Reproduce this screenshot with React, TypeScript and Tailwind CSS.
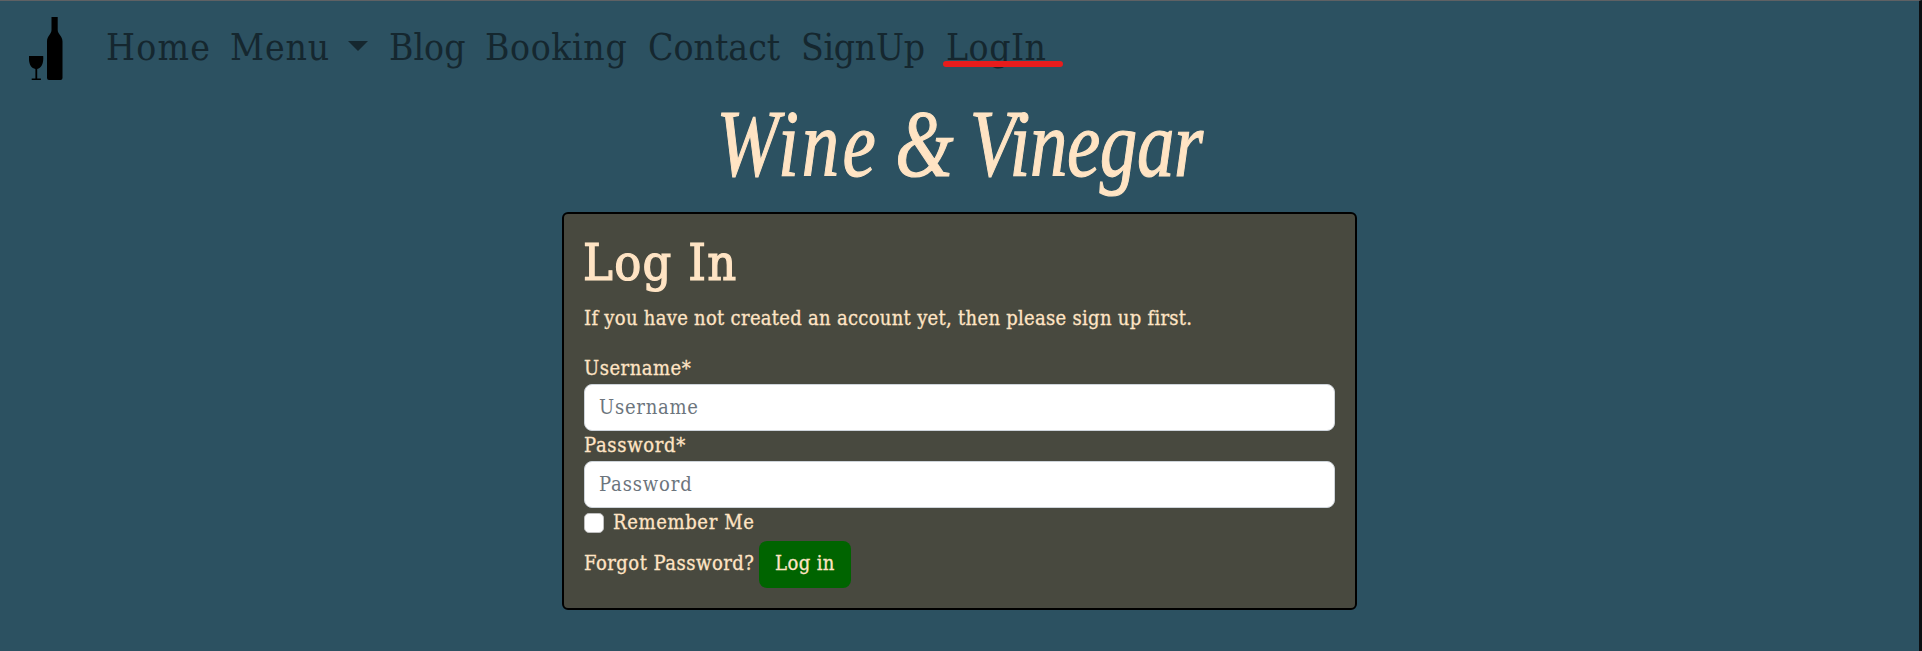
import React from "react";

const serif = "font-['DejaVu_Serif_Condensed','DejaVu_Serif',serif] [font-stretch:condensed]";

function Logo() {
  return (
    <svg className="h-[63px] w-[34px]" viewBox="0 0 34 63" fill="#000">
      <path d="M22.500 0h6.200v13c0 4 4.800 6 4.800 11.500V61q0 2-2 2H20q-2 0-2-2V24.500c0-5.500 4.500-7.500 4.500-11.500z" />
      <path d="M0 39h14.200c.6 7-1.500 12.300-6 13v9.600h3.700V63H2.700v-1.400h3.700V52C1.500 51.300-.6 46 0 39z" />
    </svg>
  );
}

function NavItem({ label, className, children }: { label: string; className: string; children?: React.ReactNode }) {
  return (
    <a href="#" className={`relative flex h-[56px] shrink-0 items-center whitespace-nowrap ${className}`}>
      <span>{label}</span>
      {children}
    </a>
  );
}

function Field({ label, type, labelClass, inputClass }: { label: string; type: string; labelClass: string; inputClass: string }) {
  return (
    <label className="block">
      <span className={`block h-[30px] [-webkit-text-stroke:0.3px_#ffe4c4] ${labelClass}`}>{label}*</span>
      <input
        type={type}
        placeholder={label}
        className={`block h-[47px] w-full rounded-[8px] border border-[#ced4da] bg-white px-[14px] pb-[2px] placeholder:text-[#6c757d] placeholder:opacity-100 ${inputClass}`}
      />
    </label>
  );
}

export default function App() {
  return (
    <div className={`h-[651px] w-[1922px] overflow-hidden border-t border-r-[3px] border-t-[#5f6164] border-r-[#0c0f12] bg-[#2c5161] text-[#ffe4c4] ${serif}`}>
      <nav className="flex h-[95px] items-start pt-[16px] pl-[29px] text-[37px] text-[#15272f]">
        <Logo />
        <div className="flex pt-[3px] pl-[43px]">
          <NavItem label="Home" className="w-[124px] tracking-[1.2px]" />
          <NavItem label="Menu" className="w-[159px] tracking-[0.8px]">
            <svg className="mt-[-4px] ml-[18px] h-[10px] w-[20px]" viewBox="0 0 20 10" fill="currentColor">
              <path d="M0 0h20L10 10z" />
            </svg>
          </NavItem>
          <NavItem label="Blog" className="w-[96px]" />
          <NavItem label="Booking" className="w-[163px] tracking-[0.6px]" />
          <NavItem label="Contact" className="w-[153px]" />
          <NavItem label="SignUp" className="w-[145px] tracking-[-0.3px]" />
          <NavItem label="LogIn" className="w-[100px] tracking-[0.5px]">
            <span className="absolute top-[41px] -left-[3px] h-[6px] w-[120px] rounded-full bg-[#e81c1c]" />
          </NavItem>
        </div>
      </nav>
      <h1 className="flex h-[116px] items-start justify-center pt-0 font-['Liberation_Serif',serif] text-[96px] leading-[96px] whitespace-nowrap italic [-webkit-text-stroke:1.2px_#ffe4c4]">
        <span className="inline-block scale-x-[0.78] [word-spacing:-3px]">
          <span className="tracking-[4px]">Wine</span> &amp; <span className="tracking-[-0.5px]">Vinegar</span>
        </span>
      </h1>
      <main className="ml-[562px] h-[398px] w-[795px] rounded-[6px] border-2 border-black bg-[#48493f] p-[20px] text-[20px] leading-[28px]">
        <h2 className="mb-[10px] h-[60px] text-[50px] leading-[58px] tracking-[1.3px]">
          <span className="ml-[-1px] [-webkit-text-stroke:1.2px_#ffe4c4]">Log In</span>
        </h2>
        <p className="mb-[20px] h-[30px] tracking-[0.29px] whitespace-nowrap [-webkit-text-stroke:0.3px_#ffe4c4]">
          <span>If you have not created an account yet, then please sign up first.</span>
        </p>
        <form>
          <Field label="Username" type="text" labelClass="tracking-[0.5px]" inputClass="tracking-[0.75px]" />
          <Field label="Password" type="password" labelClass="tracking-[0.7px]" inputClass="tracking-[0.85px]" />
          <label className="flex h-[33px] items-start">
            <input type="checkbox" className="mt-[5px] mr-[9px] size-[20px] appearance-none rounded-[5px] border border-[#bfbfbf] bg-white" />
            <span className="tracking-[0.65px] [-webkit-text-stroke:0.3px_#ffe4c4]">Remember Me</span>
          </label>
          <div className="flex h-[47px] items-center">
            <a href="#" className="w-[175px] pb-[3px] tracking-[0.5px] whitespace-nowrap [-webkit-text-stroke:0.3px_#ffe4c4]">Forgot Password?</a>
            <button type="button" className="h-[47px] w-[92px] rounded-[8px] bg-[#006400] pb-[3px] tracking-[0.4px] whitespace-nowrap [-webkit-text-stroke:0.3px_#ffe4c4]">Log in</button>
          </div>
        </form>
      </main>
    </div>
  );
}
